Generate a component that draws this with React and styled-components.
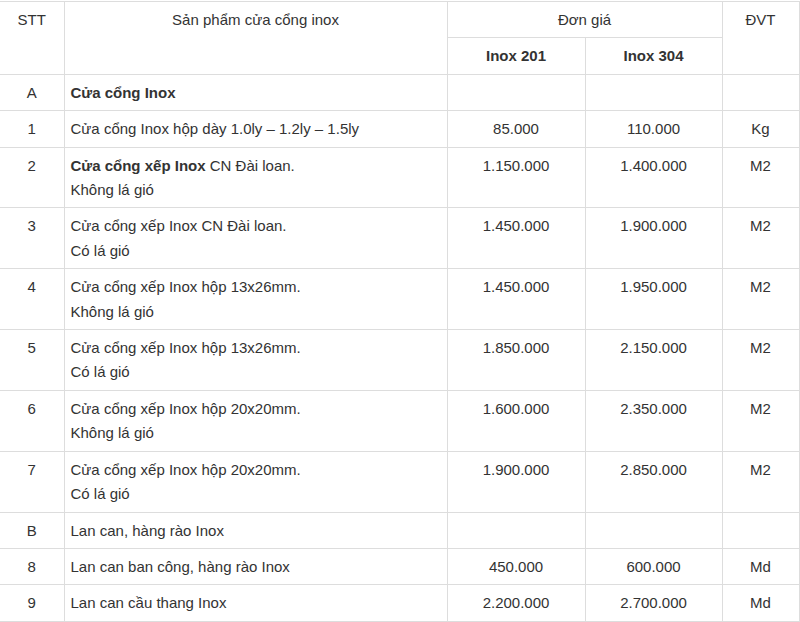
import React from "react";
import styled, { createGlobalStyle } from "styled-components";

const GlobalStyle = createGlobalStyle`
  body {
    margin: 0;
    padding-top: 1px;
    background: #fff;
    font-family: "Liberation Sans", Arial, sans-serif;
    color: #333;
  }
`;

const rows = [
  { stt: "A", name: <b>Cửa cổng Inox</b>, p201: "", p304: "", unit: "" },
  { stt: "1", name: "Cửa cổng Inox hộp dày 1.0ly – 1.2ly – 1.5ly", p201: "85.000", p304: "110.000", unit: "Kg" },
  {
    stt: "2",
    name: (
      <>
        <b>Cửa cổng xếp Inox</b> CN Đài loan.
        <br />
        Không lá gió
      </>
    ),
    p201: "1.150.000",
    p304: "1.400.000",
    unit: "M2",
  },
  { stt: "3", name: ["Cửa cổng xếp Inox CN Đài loan.", "Có lá gió"], p201: "1.450.000", p304: "1.900.000", unit: "M2" },
  { stt: "4", name: ["Cửa cổng xếp Inox hộp 13x26mm.", "Không lá gió"], p201: "1.450.000", p304: "1.950.000", unit: "M2" },
  { stt: "5", name: ["Cửa cổng xếp Inox hộp 13x26mm.", "Có lá gió"], p201: "1.850.000", p304: "2.150.000", unit: "M2" },
  { stt: "6", name: ["Cửa cổng xếp Inox hộp 20x20mm.", "Không lá gió"], p201: "1.600.000", p304: "2.350.000", unit: "M2" },
  { stt: "7", name: ["Cửa cổng xếp Inox hộp 20x20mm.", "Có lá gió"], p201: "1.900.000", p304: "2.850.000", unit: "M2" },
  { stt: "B", name: "Lan can, hàng rào Inox", p201: "", p304: "", unit: "" },
  { stt: "8", name: "Lan can ban công, hàng rào Inox", p201: "450.000", p304: "600.000", unit: "Md" },
  { stt: "9", name: "Lan can cầu thang Inox", p201: "2.200.000", p304: "2.700.000", unit: "Md" },
];

function renderName(name) {
  if (Array.isArray(name)) {
    return (
      <>
        {name[0]}
        <br />
        {name[1]}
      </>
    );
  }
  return name;
}

function App() {
  return (
    <>
      <GlobalStyle />
      <Table>
        <colgroup>
          <col style={{ width: 64 }} />
          <col style={{ width: 383 }} />
          <col style={{ width: 138 }} />
          <col style={{ width: 137 }} />
          <col style={{ width: 77 }} />
        </colgroup>
        <thead>
          <tr>
            <Cell as="th" rowSpan={2} $center $first>STT</Cell>
            <Cell as="th" rowSpan={2} $center>Sản phẩm cửa cổng inox</Cell>
            <Cell as="th" colSpan={2} $center>Đơn giá</Cell>
            <Cell as="th" rowSpan={2} $center>ĐVT</Cell>
          </tr>
          <tr>
            <Cell as="th" $center $bold>Inox 201</Cell>
            <Cell as="th" $center $bold>Inox 304</Cell>
          </tr>
        </thead>
        <tbody>
          {rows.map((r) => (
            <tr key={r.stt}>
              <Cell $center $first>{r.stt}</Cell>
              <Cell>{renderName(r.name)}</Cell>
              <Cell $center>{r.p201}</Cell>
              <Cell $center>{r.p304}</Cell>
              <Cell $center>{r.unit}</Cell>
            </tr>
          ))}
        </tbody>
      </Table>
    </>
  );
}

export default App;

const Table = styled.table`
  width: 799px;
  border-collapse: collapse;
  table-layout: fixed;
  font-size: 15px;
  line-height: 24.4px;
  color: #333;
`;

const Cell = styled.td`
  border: 1px solid #ddd;
  border-left: ${(p) => (p.$first ? "none" : "1px solid #ddd")};
  padding: 6px 6px 5px;
  vertical-align: top;
  text-align: ${(p) => (p.$center ? "center" : "left")};
  font-weight: ${(p) => (p.$bold ? 700 : 400)};

  b {
    font-weight: 700;
  }
`;
